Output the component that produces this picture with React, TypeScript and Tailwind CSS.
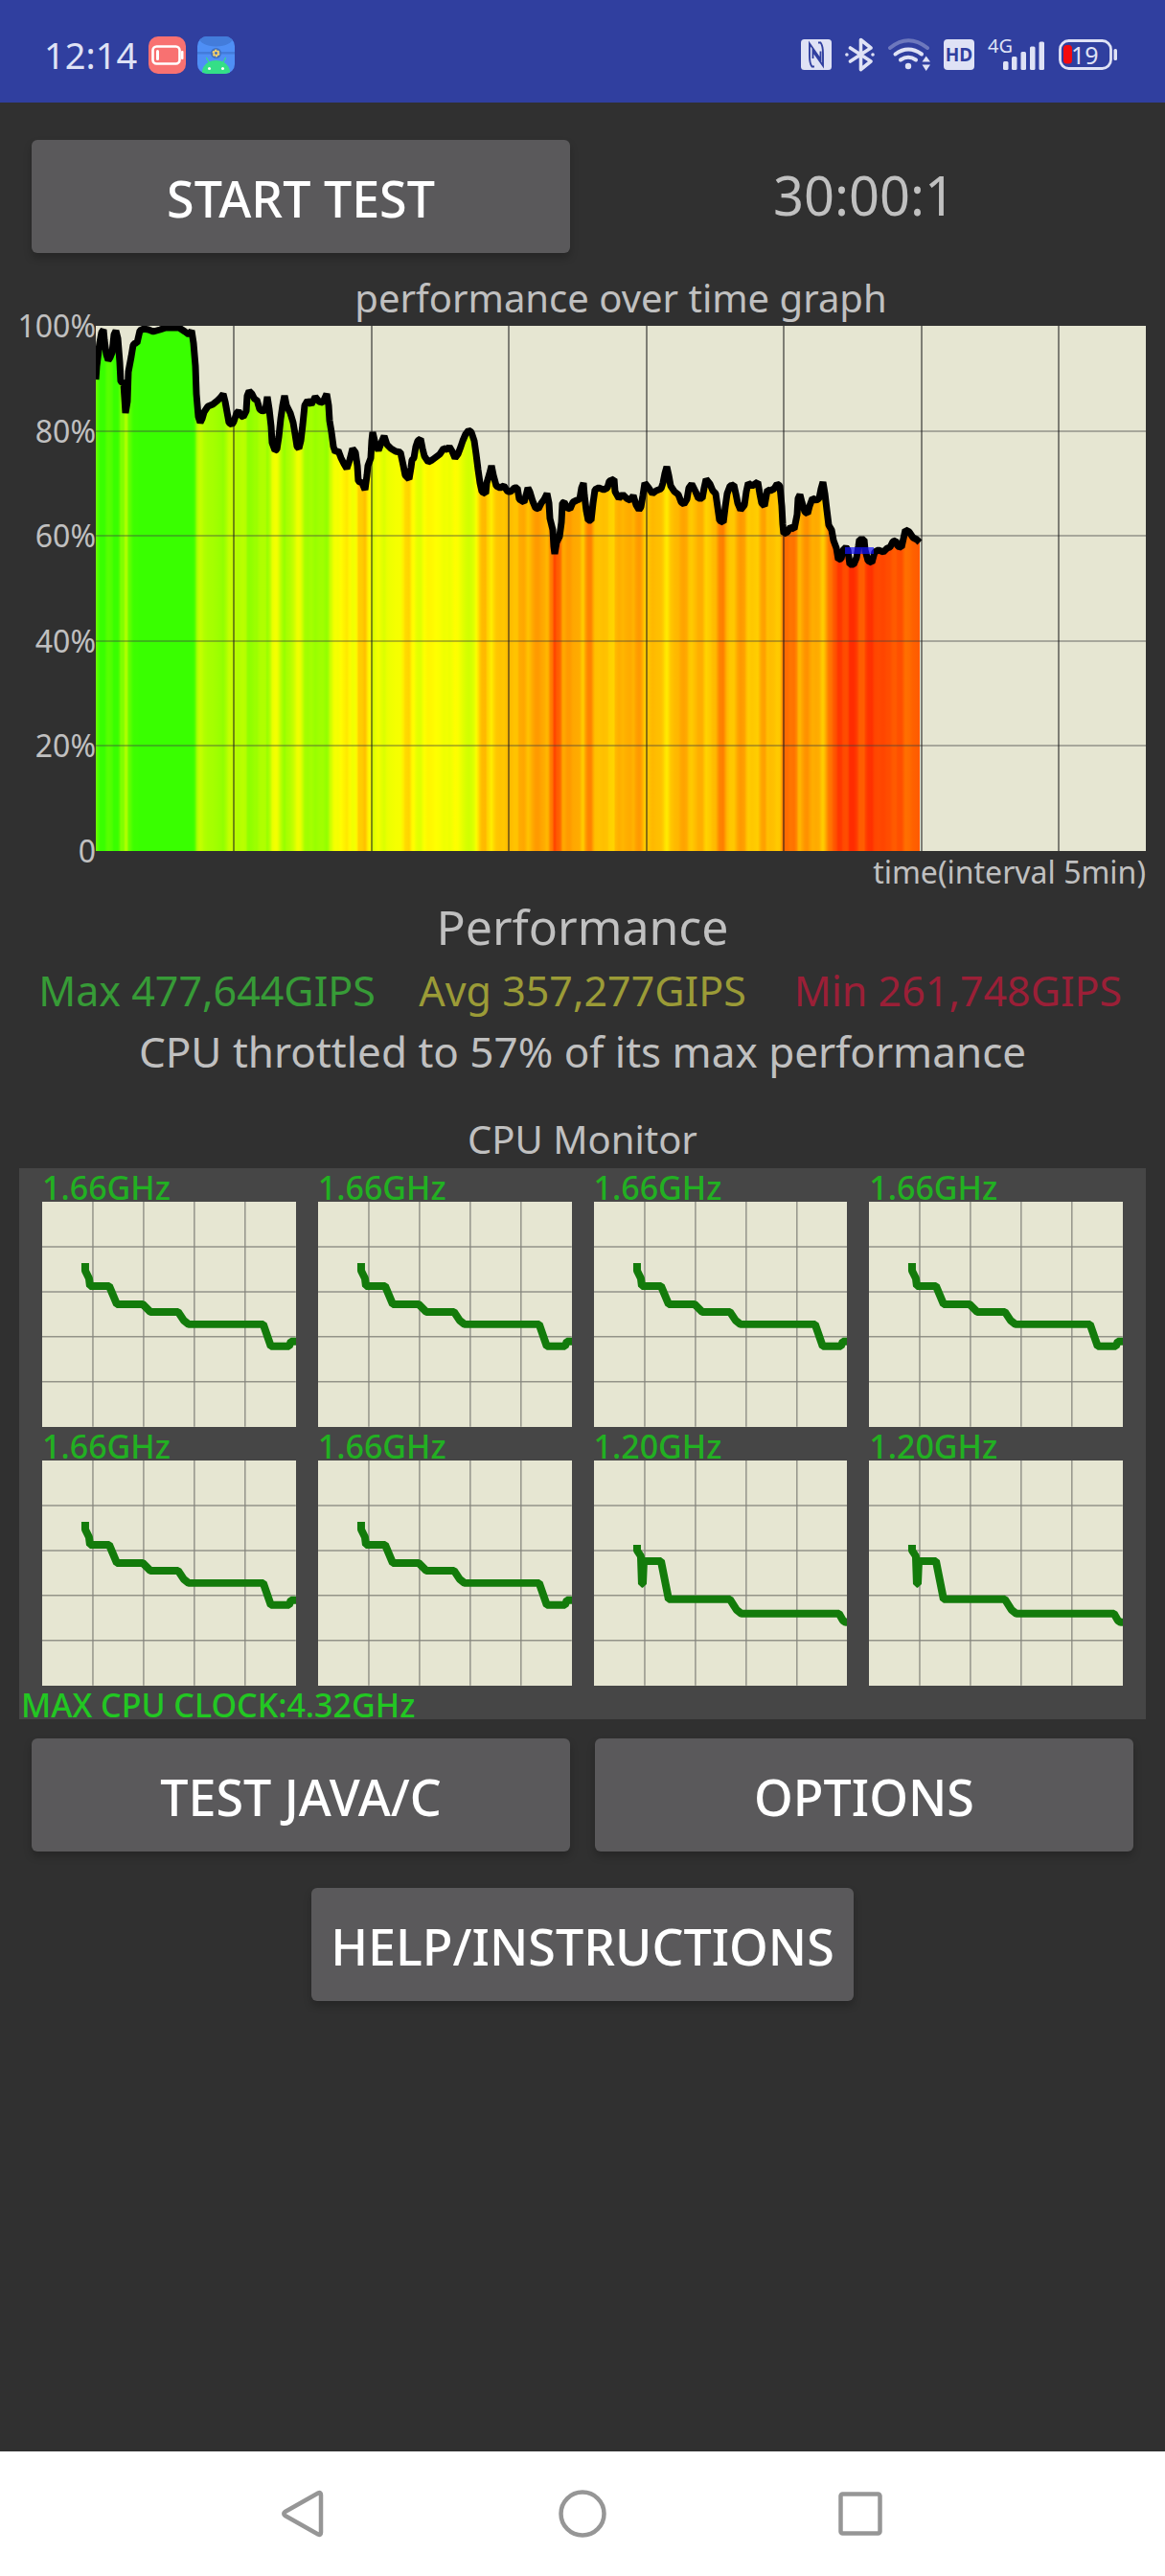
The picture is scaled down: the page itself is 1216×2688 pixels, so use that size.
import React from 'react';

type Point = [number, number];

// Performance samples in plot units (1096 x 548), y = 0 is 100%
const samples: Point[] = [
  [0, 56], [1, 42], [4, 18], [6, 7], [8, 4], [9, 15], [11, 30], [13, 36], [15, 33], [17, 28], [19, 9], [21, 5],
  [23, 13], [25, 38], [26, 58], [29, 60], [30, 75], [31, 91], [33, 79], [34, 48], [37, 32], [39, 20], [41, 18],
  [43, 18], [46, 5], [50, 3], [55, 4], [60, 6], [67, 4], [73, 2], [87, 2], [93, 6], [97, 9], [100, 5], [102, 18],
  [104, 42], [105, 71], [107, 95], [109, 101], [111, 97], [113, 90], [117, 84], [122, 82], [127, 78], [130, 75],
  [133, 71], [135, 79], [137, 90], [139, 101], [142, 103], [144, 100], [147, 91], [149, 89], [152, 94], [154, 95],
  [157, 89], [158, 73], [160, 68], [163, 71], [166, 77], [168, 77], [171, 87], [174, 89], [177, 88], [179, 74],
  [181, 87], [183, 105], [184, 122], [187, 130], [189, 129], [191, 116], [193, 97], [195, 83], [197, 73], [199, 83],
  [203, 91], [206, 101], [208, 113], [210, 126], [212, 128], [214, 120], [216, 103], [218, 83], [221, 78], [225, 82],
  [229, 74], [233, 79], [237, 80], [241, 71], [243, 83], [244, 99], [246, 111], [248, 126], [250, 132], [253, 130],
  [256, 138], [259, 144], [262, 149], [265, 140], [268, 128], [271, 132], [273, 146], [274, 162], [278, 164],
  [281, 171], [283, 156], [284, 146], [287, 138], [288, 120], [289, 111], [292, 124], [295, 130], [298, 122],
  [301, 115], [304, 124], [308, 128], [313, 131], [318, 132], [321, 146], [323, 156], [327, 160], [329, 148],
  [330, 140], [332, 138], [334, 126], [336, 120], [339, 118], [341, 128], [343, 136], [347, 142], [351, 140],
  [355, 137], [359, 134], [363, 128], [367, 129], [369, 126], [372, 131], [375, 138], [378, 134], [381, 126],
  [383, 120], [386, 113], [389, 109], [392, 111], [395, 120], [397, 134], [399, 150], [401, 164], [403, 173],
  [407, 175], [408, 164], [411, 154], [413, 146], [415, 156], [418, 167], [422, 169], [426, 167], [430, 173],
  [433, 173], [437, 169], [440, 169], [442, 181], [447, 184], [449, 177], [451, 169], [453, 173], [456, 183],
  [459, 190], [462, 191], [465, 185], [468, 181], [471, 175], [473, 185], [474, 201], [477, 213], [478, 230],
  [479, 238], [481, 226], [484, 220], [486, 205], [487, 185], [489, 184], [492, 190], [495, 191], [498, 184],
  [502, 182], [505, 181], [507, 169], [509, 164], [510, 177], [512, 193], [514, 203], [517, 203], [519, 185],
  [521, 171], [525, 169], [530, 171], [534, 169], [536, 162], [541, 160], [542, 173], [546, 180], [550, 176],
  [554, 180], [558, 182], [561, 177], [564, 187], [567, 192], [569, 189], [571, 177], [573, 164], [577, 169],
  [581, 175], [585, 172], [590, 170], [592, 164], [594, 154], [596, 147], [598, 156], [600, 167], [604, 173],
  [608, 176], [611, 184], [614, 186], [617, 181], [619, 169], [622, 165], [626, 173], [629, 180], [633, 180],
  [635, 169], [637, 160], [641, 165], [644, 172], [647, 175], [649, 189], [651, 203], [655, 205], [657, 189],
  [659, 175], [662, 167], [666, 166], [668, 175], [670, 185], [673, 192], [677, 187], [679, 173], [681, 164],
  [685, 167], [691, 163], [693, 175], [695, 185], [698, 188], [701, 171], [704, 172], [708, 170], [711, 165],
  [714, 167], [716, 188], [717, 207], [718, 217], [722, 215], [725, 210], [729, 212], [732, 197], [733, 180],
  [735, 176], [737, 184], [740, 194], [743, 196], [745, 188], [748, 180], [752, 182], [755, 180], [757, 170],
  [759, 163], [761, 175], [763, 192], [765, 208], [768, 213], [770, 224], [773, 232], [775, 244], [778, 243],
  [780, 234], [783, 231], [785, 234], [787, 249], [791, 249], [794, 242], [796, 230], [797, 223], [802, 223],
  [803, 234], [806, 245], [810, 247], [813, 236], [817, 234], [822, 236], [826, 232], [829, 231], [832, 225],
  [835, 224], [837, 230], [841, 231], [843, 222], [845, 213], [849, 215], [853, 221], [857, 223], [860, 226],
];

const bigCore: Point[] = [
  [45, 64], [45, 72], [49, 80], [50, 88], [70, 88], [78, 107], [105, 107], [113, 115], [142, 115], [148, 124],
  [153, 128], [231, 128], [239, 151], [258, 151], [260, 146], [266, 146],
];

const smallCore: Point[] = [
  [45, 88], [45, 94], [49, 100], [50, 129], [51, 129], [52, 105], [70, 105], [78, 145], [142, 145], [149, 156],
  [154, 160], [256, 160], [260, 167], [263, 169], [266, 169],
];

const cores = [
  { id: 0, clock: '1.66GHz', points: bigCore },
  { id: 1, clock: '1.66GHz', points: bigCore },
  { id: 2, clock: '1.66GHz', points: bigCore },
  { id: 3, clock: '1.66GHz', points: bigCore },
  { id: 4, clock: '1.66GHz', points: bigCore },
  { id: 5, clock: '1.66GHz', points: bigCore },
  { id: 6, clock: '1.20GHz', points: smallCore },
  { id: 7, clock: '1.20GHz', points: smallCore },
];

const toPoints = (points: Point[]): string => points.map((p) => p.join(',')).join(' ');

// Green at full speed, yellow at 75%, red below 55%
const heatColor = (y: number): string => {
  const percent = 100 - y / 5.48;
  if (percent >= 75) {
    const red = Math.max(57, Math.round(255 - (percent - 75) * 9));
    return `rgb(${red}, 255, 0)`;
  }
  const green = Math.max(0, Math.round(255 - (75 - percent) * 10.3));
  return `rgb(255, ${green}, 0)`;
};

const PerformanceChart: React.FC = () => (
  <svg viewBox="0 0 1096 548" className="block w-full h-auto bg-[#e6e6d2]" role="img" aria-label="performance over time">
    <defs>
      <linearGradient id="heat" gradientUnits="userSpaceOnUse" x1="0" y1="0" x2="860" y2="0">
        {samples.map(([x, y]) => (
          <stop key={x} offset={x / 860} stopColor={heatColor(y)} />
        ))}
      </linearGradient>
    </defs>
    <polygon points={`0,548 ${toPoints(samples)} 860,548`} fill="url(#heat)" />
    {[110, 219, 329, 438].map((y) => (
      <line key={y} x1="0" x2="1096" y1={y} y2={y} stroke="#404040" strokeOpacity="0.5" strokeWidth="1.5" />
    ))}
    {[144, 288, 431, 575, 718, 862, 1005].map((x) => (
      <line key={x} x1={x} x2={x} y1="0" y2="548" stroke="#202020" strokeOpacity="0.7" strokeWidth="1.5" />
    ))}
    <polyline points={toPoints(samples)} fill="none" stroke="#000" strokeWidth="7" strokeLinejoin="bevel" />
    <rect x="782" y="231" width="30" height="7" fill="#1414ff" fillOpacity="0.7" />
  </svg>
);

const CoreChart: React.FC<{ clock: string; points: Point[] }> = ({ clock, points }) => (
  <div>
    <p className="h-[35px] leading-10 text-[34px] font-medium text-[#22b022] whitespace-nowrap">{clock}</p>
    <svg viewBox="0 0 265 235" className="block w-full h-auto bg-[#e6e6d2]" aria-hidden="true">
      {[53, 106, 159, 212].map((x) => (
        <line key={x} x1={x} x2={x} y1="0" y2="235" stroke="#85857d" strokeOpacity="0.85" strokeWidth="1.5" />
      ))}
      {[47, 94, 141, 188].map((y) => (
        <line key={y} x1="0" x2="265" y1={y} y2={y} stroke="#85857d" strokeOpacity="0.85" strokeWidth="1.5" />
      ))}
      <polyline points={toPoints(points)} fill="none" stroke="#137b0b" strokeWidth="8" strokeLinejoin="bevel" />
    </svg>
  </div>
);

const AppButton: React.FC<{ children: React.ReactNode; className?: string }> = ({ children, className = '' }) => (
  <button
    type="button"
    className={`h-[118px] pt-1 rounded-md bg-[#5a595b] text-[52px] leading-none font-medium text-white whitespace-nowrap shadow-[0_5px_8px_rgba(0,0,0,0.22)] ${className}`}
  >
    {children}
  </button>
);

const StatusBar: React.FC = () => (
  <header className="flex h-[107px] items-center justify-between bg-[#303f9f] pt-[7px] pr-[50px] pl-[46px] text-[#dfe2f5]">
    <div className="flex items-center gap-3">
      <span className="text-[38px] leading-none">12:14</span>
      {/* Low battery notification */}
      <svg width="39" height="39" viewBox="0 0 39 39" aria-hidden="true">
        <rect width="39" height="39" rx="10" fill="#f87171" />
        <rect x="4.5" y="10.5" width="28" height="18" rx="4" fill="none" stroke="#fff" strokeWidth="2.6" />
        <rect x="8" y="14" width="3" height="11" rx="1.5" fill="#fff" />
        <rect x="34" y="15" width="2.5" height="9" rx="1" fill="#fff" />
      </svg>
      {/* Android notification */}
      <svg width="39" height="39" viewBox="0 0 39 39" aria-hidden="true">
        <defs>
          <clipPath id="droid">
            <rect width="39" height="39" rx="10" />
          </clipPath>
        </defs>
        <g clipPath="url(#droid)">
          <rect width="39" height="39" fill="#4f8ff5" />
          <ellipse cx="19.5" cy="1" rx="18" ry="9.5" fill="#437cdb" />
          <rect y="16" width="39" height="2.5" fill="#437cdb" />
          <circle cx="19.5" cy="17.5" r="5.5" fill="#3f6fc0" />
          <circle cx="19.5" cy="17.5" r="3" fill="none" stroke="#f4cf6a" strokeWidth="2" strokeDasharray="2 1.1" />
          <circle cx="19.5" cy="17.5" r="2.2" fill="none" stroke="#f4cf6a" strokeWidth="1.5" />
          <path d="M9.5 22.5l3 5M29.5 22.5l-3 5" stroke="#34df87" strokeWidth="1.2" strokeLinecap="round" />
          <path d="M5 39V36C6 29.5 12 25 19.5 25S33 29.5 34 36V39Z" fill="#34df87" />
          <circle cx="12.5" cy="33.5" r="1.5" fill="#fff" />
          <circle cx="26.5" cy="33.5" r="1.5" fill="#fff" />
        </g>
      </svg>
    </div>

    <div className="flex items-center gap-[14px]">
      {/* NFC */}
      <svg width="32" height="32" viewBox="0 0 32 32" aria-hidden="true">
        <rect width="32" height="32" rx="3.5" fill="#dfe2f5" />
        <path
          d="M14 28.5H11.5C9.5 26 9 22 9 17V4.5L20.5 21V12.5M18 3.5H20.5C22.5 6 23 10 23 15V27.5L12.5 12.5V20"
          fill="none"
          stroke="#303f9f"
          strokeWidth="1.9"
        />
      </svg>
      {/* Bluetooth */}
      <svg width="31" height="36" viewBox="0 0 31 36" fill="none" stroke="currentColor" strokeWidth="3.6" strokeLinecap="round" strokeLinejoin="round" aria-hidden="true">
        <path d="M5.5 11L27 25L16.5 33.5V2.5L27 11L5.5 25" />
        <path d="M1.9 18h.01M29 18h.01" />
      </svg>
      {/* Wi-Fi */}
      <svg width="44" height="34" viewBox="0 0 44 34" fill="none" stroke="currentColor" strokeWidth="4" strokeLinecap="round" aria-hidden="true">
        <path d="M2 10Q21 -5.5 41 10" strokeOpacity="0.35" />
        <path d="M7.5 16.5Q21 6.500 35 16.5" />
        <path d="M13 22.5Q21 17 29 22.5" />
        <circle cx="21" cy="29" r="3.2" fill="currentColor" stroke="none" />
        <path d="M35.5 24.5L39.7 18.5L44 24.5ZM35.5 27.5H44L39.7 34Z" fill="currentColor" stroke="none" />
      </svg>
      <span className="flex h-8 w-8 items-center justify-center rounded bg-[#dfe2f5] text-[19px] leading-none font-bold text-[#303f9f]">
        HD
      </span>
      {/* Mobile signal */}
      <div className="relative">
        <span className="absolute -top-1 left-0 text-[20px] leading-6">4G</span>
        <svg width="60" height="34" viewBox="0 0 60 34" fill="currentColor" aria-hidden="true">
          <rect x="16" y="24" width="5.5" height="9" rx="1.5" />
          <rect x="25" y="19" width="5.5" height="14" rx="1.5" />
          <rect x="34.5" y="14" width="5.5" height="19" rx="1.5" />
          <rect x="44" y="8.5" width="5.5" height="24.5" rx="1.5" />
          <rect x="53.5" y="3.5" width="5.5" height="29.5" rx="1.5" />
        </svg>
      </div>
      {/* Battery */}
      <div className="relative">
        <svg width="61" height="32" viewBox="0 0 61 32" fill="currentColor" aria-hidden="true">
          <rect x="1.5" y="1.5" width="53" height="29" rx="9" fill="none" stroke="currentColor" strokeWidth="2.8" />
          <rect x="5" y="6" width="9" height="19.5" rx="3.5" fill="#f40a0f" />
          <rect x="57.5" y="10" width="3.5" height="12" rx="1.5" />
        </svg>
        <span className="absolute top-0 left-[13px] text-[25px] leading-8">19</span>
      </div>
    </div>
  </header>
);

const App: React.FC = () => {
  return (
    <div className="flex min-h-screen flex-col bg-[#303030] font-['Noto_Sans',sans-serif] text-[#c0c0c0]">
      <StatusBar />

      <main className="flex flex-1 flex-col px-5 pt-[39px]">
        <div className="grid grid-cols-2 items-center gap-[26px] px-[13px]">
          <AppButton>START TEST</AppButton>
          <p className="pb-1 text-center text-[56px] leading-none">30:00:1</p>
        </div>

        {/* Throttling graph */}
        <section className="mt-[27px] grid grid-cols-[80px_minmax(0,1fr)]">
          <h1 className="col-start-2 h-[49px] text-center text-[40px] leading-10">performance over time graph</h1>
          <div className="col-start-1 -my-4 flex flex-col items-end justify-between text-[32px] leading-8">
            <span>100%</span>
            <span>80%</span>
            <span>60%</span>
            <span>40%</span>
            <span>20%</span>
            <span>0</span>
          </div>
          <PerformanceChart />
          <p className="col-start-2 text-right text-[32px] leading-[44px]">time(interval 5min)</p>
        </section>

        {/* Results */}
        <section className="mt-[5px] text-center">
          <h2 className="text-[50px] leading-[60px]">Performance</h2>
          <div className="mt-[7px] grid grid-cols-3 text-[43px] leading-[60px] whitespace-nowrap">
            <span className="text-[#379b37]">Max 477,644GIPS</span>
            <span className="text-[#9b9b37]">Avg 357,277GIPS</span>
            <span className="text-[#9b1f37]">Min 261,748GIPS</span>
          </div>
          <p className="mt-[3px] text-[44px] leading-[60px]">CPU throttled to 57% of its max performance</p>
        </section>

        {/* CPU monitor */}
        <section className="mt-[42px]">
          <h2 className="text-center text-[40px] leading-10">CPU Monitor</h2>
          <div className="mt-[10px] bg-[#464646]">
            <div className="grid grid-cols-4 gap-x-[23px] px-6">
              {cores.map((core) => (
                <CoreChart key={core.id} clock={core.clock} points={core.points} />
              ))}
            </div>
            <p className="h-[35px] pl-[2px] leading-10 text-[34px] font-medium text-[#22c722]">MAX CPU CLOCK:4.32GHz</p>
          </div>
        </section>

        <div className="mt-5 grid grid-cols-2 gap-[26px] px-[13px]">
          <AppButton>TEST JAVA/C</AppButton>
          <AppButton>OPTIONS</AppButton>
        </div>
        <AppButton className="mt-[38px] self-center px-5">HELP/INSTRUCTIONS</AppButton>
      </main>

      {/* System navigation */}
      <nav className="flex h-[130px] items-center justify-center gap-[240px] bg-white text-[#969696]">
        <button type="button" aria-label="Back">
          <svg width="50" height="50" viewBox="0 0 50 50" fill="none" stroke="currentColor" strokeWidth="4.5" strokeLinejoin="round" aria-hidden="true">
            <path d="M42 5.5Q42 2 39 3.5L4.5 23Q2 25 4.5 27L39 46.5Q42 48 42 44.5Z" />
          </svg>
        </button>
        <button type="button" aria-label="Home">
          <svg width="50" height="50" viewBox="0 0 50 50" fill="none" stroke="currentColor" strokeWidth="4.5" aria-hidden="true">
            <circle cx="25" cy="25" r="22.5" />
          </svg>
        </button>
        <button type="button" aria-label="Recent apps">
          <svg width="50" height="50" viewBox="0 0 50 50" fill="none" stroke="currentColor" strokeWidth="4.5" aria-hidden="true">
            <rect x="4.5" y="4.5" width="41" height="41" rx="2" />
          </svg>
        </button>
      </nav>
    </div>
  );
};

export default App;
